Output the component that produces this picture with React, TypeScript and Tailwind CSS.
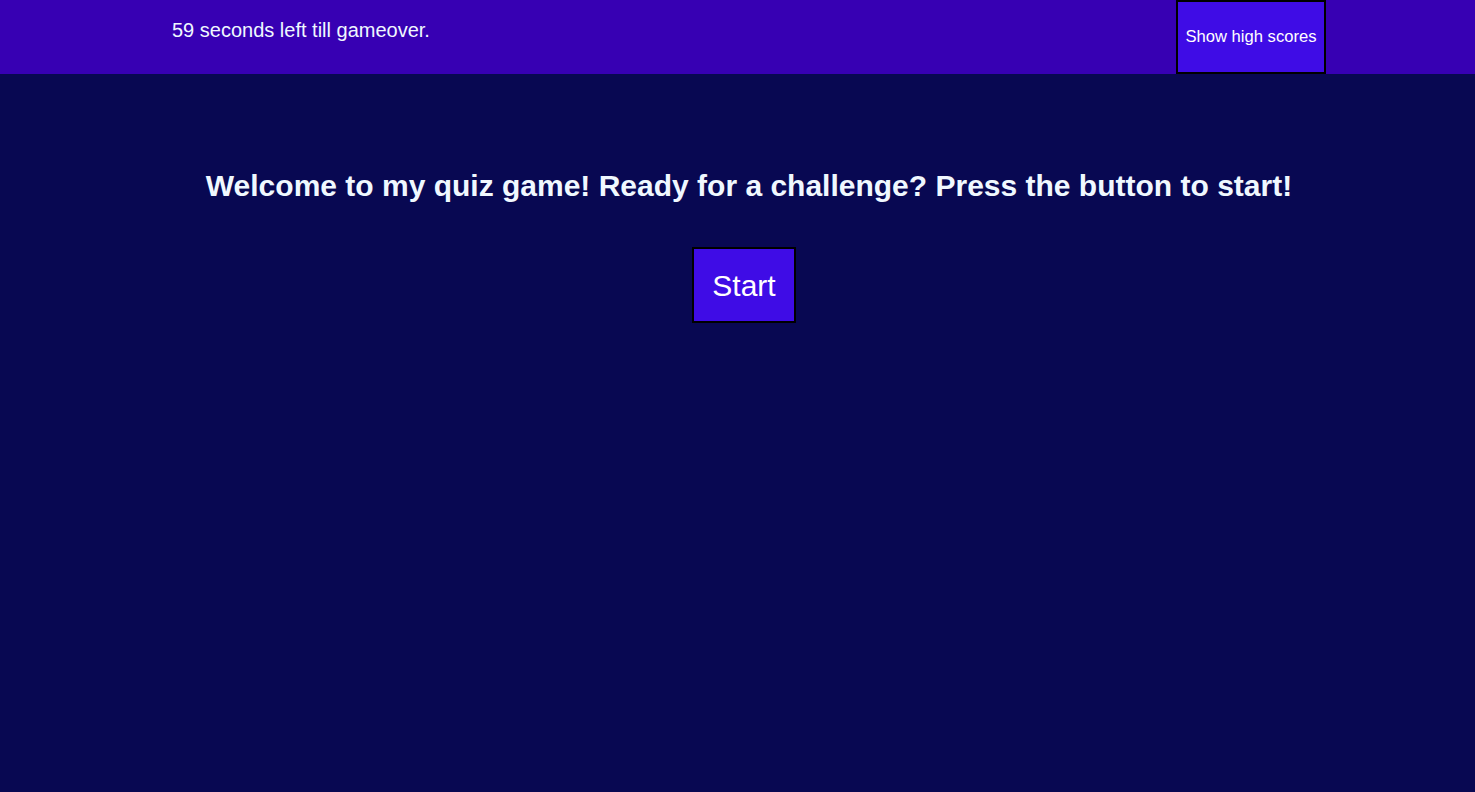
export default function App() {
  return (
    <div className="min-h-[792px] bg-[#080852] font-['Liberation_Sans',Arial,sans-serif] text-[#f0f8ff]">
      <header className="flex h-[74px] items-start justify-between bg-[#3700b3] pl-[172px] pr-[149px]">
        <p className="pt-[18px] text-[20px] leading-[24px]">59 seconds left till gameover.</p>
        <button className="h-[74px] w-[150px] border-2 border-black bg-[#3f0ce6] text-[16.6px] text-white">
          Show high scores
        </button>
      </header>
      <main className="flex flex-col items-center pt-[95px]">
        <h1 className="pl-[23px] text-[30px] font-bold leading-[34px]">
          Welcome to my quiz game! Ready for a challenge? Press the button to start!
        </h1>
        <button className="ml-[13px] mt-[44px] h-[76px] w-[104px] border-2 border-black bg-[#3f0ce6] text-[30px] text-white">
          Start
        </button>
      </main>
    </div>
  );
}
